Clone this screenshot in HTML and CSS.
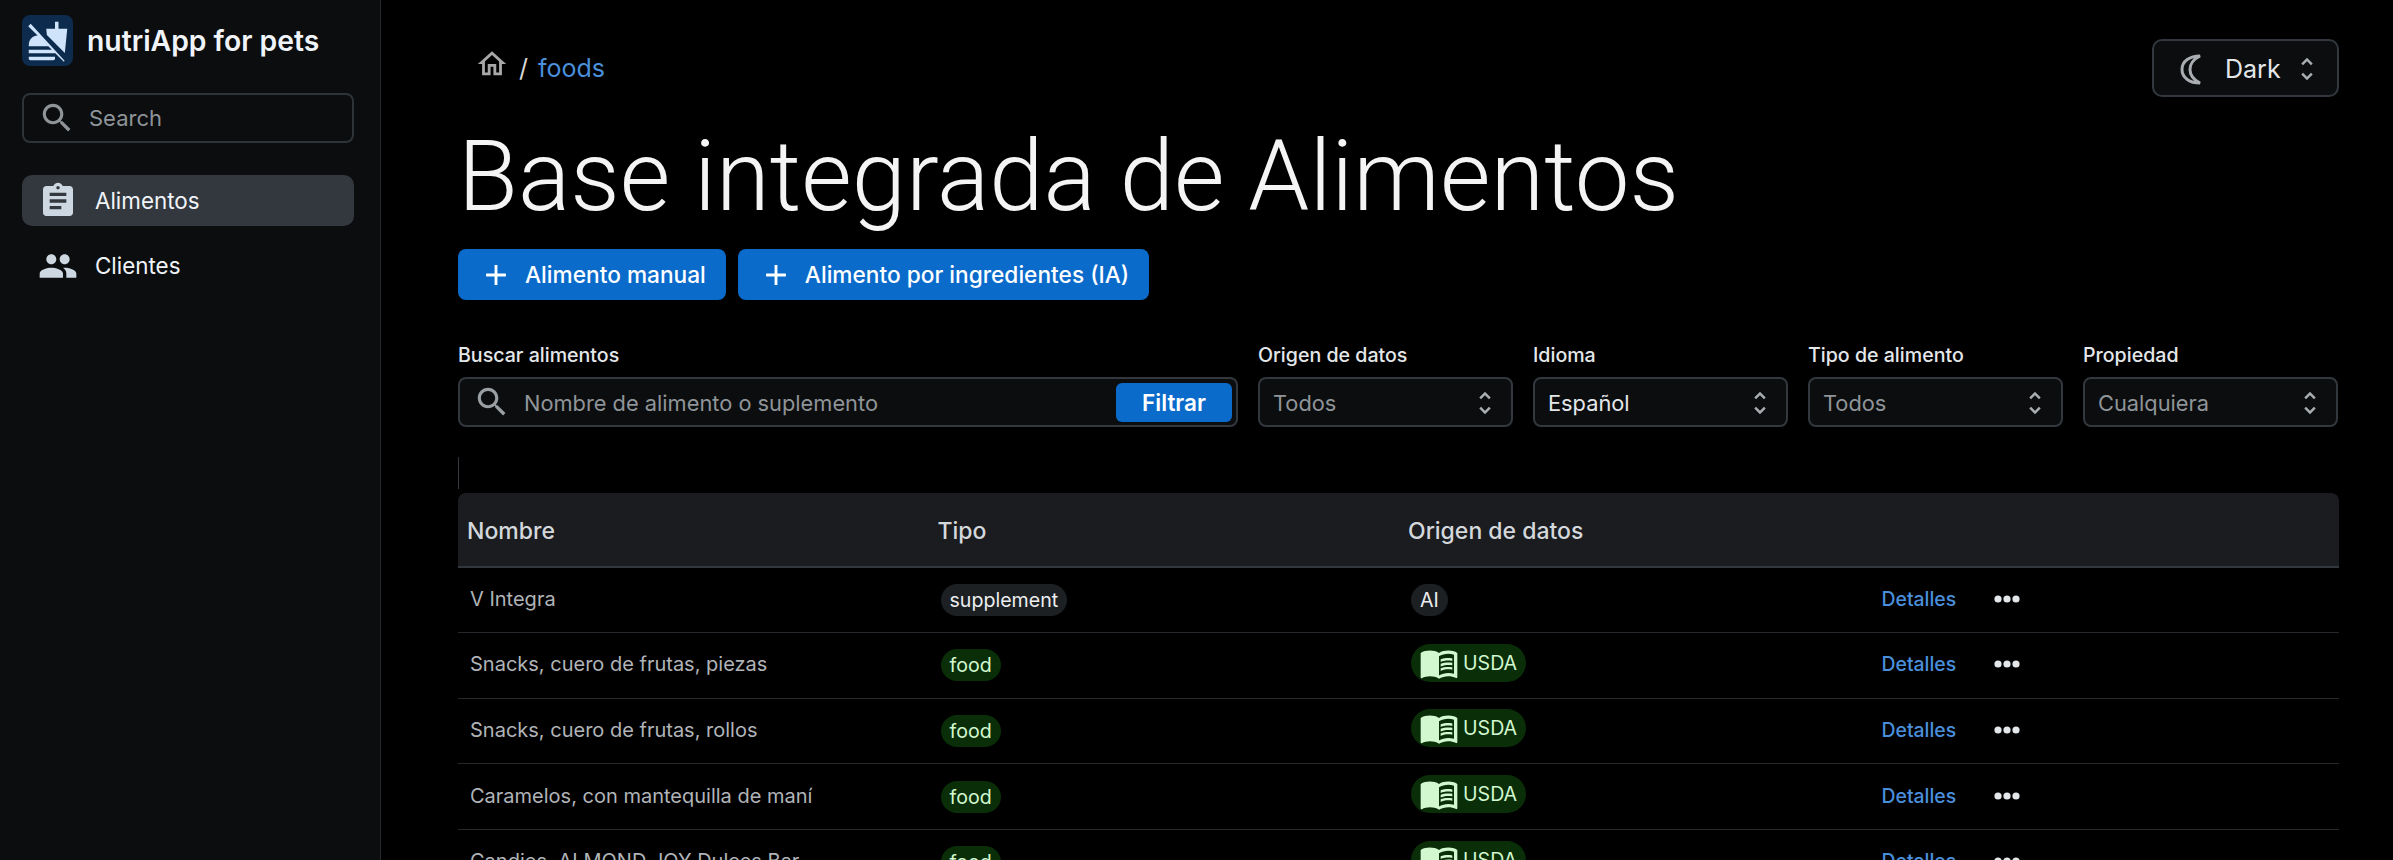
FILE: index.html
```html
<!DOCTYPE html>
<html lang="es">
<head>
    <meta charset="UTF-8">
    <meta name="viewport" content="width=device-width, initial-scale=1.0">
    <title>nutriApp for pets</title>
    <link rel="stylesheet" href="styles.css">
</head>
<body>
    <div class="sidebar">
        <div class="brand">
            <div class="brand-logo">
                <svg viewBox="0 0 24 24" width="42" height="42"><path d="M11.35 8.52L11 5h5V1h2v4h5l-1.38 13.79L11.35 8.52zM1 21v1c0 .55.45 1 1 1h13c.55 0 1-.45 1-1v-1H1zm20.49 2.31L2.1 2.1.69 3.51l5.35 5.35C3.33 9.2 1 10.53 1 15h11.17l2 2H1v2h15v-.17l5.07 5.07z"/></svg>
            </div>
            <span class="brand-name">nutriApp for pets</span>
        </div>
        <div class="side-search">
            <svg viewBox="0 0 24 24" width="38" height="38"><path d="M15.5 14h-.79l-.28-.27C15.41 12.59 16 11.11 16 9.5 16 5.91 13.09 3 9.5 3S3 5.91 3 9.5 5.91 16 9.5 16c1.61 0 3.09-.59 4.23-1.57l.27.28v.79l5 4.99L20.49 19l-4.99-5zm-6 0C7.01 14 5 11.99 5 9.5S7.01 5 9.5 5 14 7.01 14 9.5 11.99 14 9.5 14z"/></svg>
            <span>Search</span>
        </div>
        <div class="nav">
            <a class="nav-item active" href="#">
                <svg viewBox="0 0 24 24" width="40" height="40"><path d="M19 3h-4.18C14.4 1.84 13.3 1 12 1c-1.3 0-2.4.84-2.82 2H5c-1.1 0-2 .9-2 2v14c0 1.1.9 2 2 2h14c1.1 0 2-.9 2-2V5c0-1.1-.9-2-2-2zm-7 0c.55 0 1 .45 1 1s-.45 1-1 1-1-.45-1-1 .45-1 1-1zm2 14H7v-2h7v2zm3-4H7v-2h10v2zm0-4H7V7h10v2z"/></svg>
                Alimentos
            </a>
            <a class="nav-item" href="#">
                <svg viewBox="0 0 24 24" width="40" height="40"><path d="M16 11c1.66 0 2.99-1.34 2.99-3S17.66 5 16 5c-1.66 0-3 1.34-3 3s1.34 3 3 3zm-8 0c1.66 0 2.99-1.34 2.99-3S9.66 5 8 5C6.34 5 5 6.34 5 8s1.34 3 3 3zm0 2c-2.33 0-7 1.17-7 3.5V19h14v-2.5c0-2.33-4.67-3.5-7-3.5zm8 0c-.29 0-.62.02-.97.05 1.16.84 1.97 1.97 1.97 3.45V19h6v-2.5c0-2.33-4.67-3.5-7-3.5z"/></svg>
                Clientes
            </a>
        </div>
    </div>

    <div class="main">
        <div class="topbar">
            <div class="breadcrumb">
                <svg viewBox="0 0 24 24" width="34" height="34"><path d="M12 5.69l5 4.5V18h-2v-6H9v6H7v-7.81l5-4.5M12 3L2 12h3v8h6v-6h2v6h6v-8h3L12 3z"/></svg>
                <span class="crumb-sep">/</span>
                <a class="crumb-link" href="#">foods</a>
            </div>
            <div class="theme-select">
                <svg class="moon" viewBox="0 0 24 32" width="24" height="32"><path d="M21 3C11 3 3 8 3 16.5S11 30 21 30C15 27 11 22 11 16.5S15 6 21 3Z"/></svg>
                <span>Dark</span>
                <svg class="unfold" viewBox="0 0 24 24" width="30" height="30"><path d="M12 5.83 15.17 9l1.41-1.41L12 3 7.41 7.59 8.83 9 12 5.83zm0 12.34L8.83 15l-1.41 1.41L12 21l4.59-4.59L15.17 15 12 18.17z"/></svg>
            </div>
        </div>

        <h1 class="title">Base integrada de Alimentos</h1>

        <div class="actions">
            <button class="btn">
                <svg viewBox="0 0 24 24" width="34" height="34"><path d="M19 13h-6v6h-2v-6H5v-2h6V5h2v6h6v2z"/></svg>
                Alimento manual
            </button>
            <button class="btn">
                <svg viewBox="0 0 24 24" width="34" height="34"><path d="M19 13h-6v6h-2v-6H5v-2h6V5h2v6h6v2z"/></svg>
                Alimento por ingredientes (IA)
            </button>
        </div>

        <div class="filters">
            <div class="field">
                <label>Buscar alimentos</label>
                <div class="control search-control">
                    <svg viewBox="0 0 24 24" width="38" height="38"><path d="M15.5 14h-.79l-.28-.27C15.41 12.59 16 11.11 16 9.5 16 5.91 13.09 3 9.5 3S3 5.91 3 9.5 5.91 16 9.5 16c1.61 0 3.09-.59 4.23-1.57l.27.28v.79l5 4.99L20.49 19l-4.99-5zm-6 0C7.01 14 5 11.99 5 9.5S7.01 5 9.5 5 14 7.01 14 9.5 11.99 14 9.5 14z"/></svg>
                    <span class="placeholder">Nombre de alimento o suplemento</span>
                    <button class="filter-btn">Filtrar</button>
                </div>
            </div>
            <div class="field">
                <label>Origen de datos</label>
                <div class="control select"><span class="placeholder">Todos</span>
                    <svg class="unfold" viewBox="0 0 24 24" width="30" height="30"><path d="M12 5.83 15.17 9l1.41-1.41L12 3 7.41 7.59 8.83 9 12 5.83zm0 12.34L8.83 15l-1.41 1.41L12 21l4.59-4.59L15.17 15 12 18.17z"/></svg>
                </div>
            </div>
            <div class="field">
                <label>Idioma</label>
                <div class="control select"><span>Español</span>
                    <svg class="unfold" viewBox="0 0 24 24" width="30" height="30"><path d="M12 5.83 15.17 9l1.41-1.41L12 3 7.41 7.59 8.83 9 12 5.83zm0 12.34L8.83 15l-1.41 1.41L12 21l4.59-4.59L15.17 15 12 18.17z"/></svg>
                </div>
            </div>
            <div class="field">
                <label>Tipo de alimento</label>
                <div class="control select"><span class="placeholder">Todos</span>
                    <svg class="unfold" viewBox="0 0 24 24" width="30" height="30"><path d="M12 5.83 15.17 9l1.41-1.41L12 3 7.41 7.59 8.83 9 12 5.83zm0 12.34L8.83 15l-1.41 1.41L12 21l4.59-4.59L15.17 15 12 18.17z"/></svg>
                </div>
            </div>
            <div class="field">
                <label>Propiedad</label>
                <div class="control select"><span class="placeholder">Cualquiera</span>
                    <svg class="unfold" viewBox="0 0 24 24" width="30" height="30"><path d="M12 5.83 15.17 9l1.41-1.41L12 3 7.41 7.59 8.83 9 12 5.83zm0 12.34L8.83 15l-1.41 1.41L12 21l4.59-4.59L15.17 15 12 18.17z"/></svg>
                </div>
            </div>
        </div>

        <div class="divider"></div>

        <table class="foods">
            <thead>
                <tr>
                    <th>Nombre</th>
                    <th>Tipo</th>
                    <th>Origen de datos</th>
                    <th></th>
                </tr>
            </thead>
            <tbody id="rows"></tbody>
        </table>
    </div>

    <svg class="sprites" width="0" height="0">
        <symbol id="book" viewBox="0 0 24 24">
            <path d="M21 5c-1.11-.35-2.33-.5-3.5-.5-1.95 0-4.05.4-5.5 1.5-1.45-1.1-3.55-1.5-5.5-1.5S2.45 4.9 1 6v14.65c0 .25.25.5.5.5.1 0 .15-.05.25-.05C3.1 20.45 5.05 20 6.5 20c1.95 0 4.05.4 5.5 1.5 1.35-.85 3.8-1.5 5.5-1.5 1.65 0 3.35.3 4.75 1.05.1.05.15.05.25.05.25 0 .5-.25.5-.5V6c-.6-.45-1.25-.75-2-1zm0 13.5c-1.1-.35-2.3-.5-3.5-.5-1.7 0-4.15.65-5.5 1.5V8c1.35-.85 3.8-1.5 5.5-1.5 1.2 0 2.4.15 3.5.5v11.5z"/>
            <path d="M17.5 10.5c.88 0 1.73.09 2.5.26V9.24c-.79-.15-1.64-.24-2.5-.24-1.7 0-3.24.29-4.5.78v1.66c1.13-.64 2.7-.94 4.5-.94zM13 12.49v1.66c1.13-.64 2.7-.99 4.5-.99.88 0 1.73.09 2.5.26V11.9c-.79-.15-1.64-.24-2.5-.24-1.7 0-3.24.3-4.5.83zM17.5 14.33c-1.7 0-3.24.29-4.5.78v1.66c1.13-.64 2.7-.99 4.5-.99.88 0 1.73.09 2.5.26v-1.52c-.79-.16-1.64-.19-2.5-.19z"/>
        </symbol>
    </svg>

    <script>
        // Filas de la tabla
        const foods = [
            ['V Integra', 'supplement', 'AI'],
            ['Snacks, cuero de frutas, piezas', 'food', 'USDA'],
            ['Snacks, cuero de frutas, rollos', 'food', 'USDA'],
            ['Caramelos, con mantequilla de maní', 'food', 'USDA'],
            ['Candies, ALMOND JOY Dulces Bar', 'food', 'USDA']
        ];
        const rows = document.getElementById('rows');
        foods.forEach(food => {
            const green = food[1] === 'food' ? ' green' : '';
            const origin = food[2] === 'USDA'
                ? `<span class="pill green origin"><svg width="40" height="40"><use href="#book"/></svg>USDA</span>`
                : `<span class="pill">${food[2]}</span>`;
            rows.innerHTML += `<tr>
                <td class="name">${food[0]}</td>
                <td><span class="pill${green}">${food[1]}</span></td>
                <td>${origin}</td>
                <td><div class="row-actions"><a href="#">Detalles</a>
                    <svg viewBox="0 0 26 8" width="26" height="8"><circle cx="4" cy="4" r="3.6"/><circle cx="13" cy="4" r="3.6"/><circle cx="22" cy="4" r="3.6"/></svg>
                </div></td>
            </tr>`;
        });
    </script>
</body>
</html>
```

FILE: styles.css
```css
html, body {
    margin: 0;
    padding: 0;
    height: 100%;
    overflow: hidden;
}
body {
    display: flex;
    background-color: #000;
    color: #f0f4f8;
    font-family: Inter, "Noto Sans", sans-serif;
}
svg {
    fill: currentColor;
    flex-shrink: 0;
}
a {
    text-decoration: none;
}
.sprites {
    position: absolute;
}

/* Barra lateral */
.sidebar {
    width: 380px;
    flex-shrink: 0;
    padding: 15px 0 0;
    background-color: #0b0d0f;
    border-right: 1px solid #25282c;
}
.brand {
    display: flex;
    align-items: center;
    gap: 14px;
    margin-left: 22px;
}
.brand-logo {
    width: 51px;
    height: 51px;
    border-radius: 8px;
    background-color: #0c2b4d;
    color: #cfe4fb;
    display: flex;
    align-items: center;
    justify-content: center;
}
.brand-name {
    font-size: 28.3px;
    font-weight: 600;
    color: #f0f4f8;
}
.side-search {
    display: flex;
    align-items: center;
    gap: 13px;
    height: 50px;
    box-sizing: border-box;
    width: 332px;
    margin: 27px 0 0 22px;
    padding-left: 14px;
    border: 2px solid #2e3338;
    border-radius: 8px;
    background-color: #0b0d0e;
    color: #8f9499;
    font-size: 22px;
}
.nav {
    margin: 32px 0 0 22px;
    width: 332px;
    display: flex;
    flex-direction: column;
    gap: 14px;
}
.nav-item {
    display: flex;
    align-items: center;
    gap: 17px;
    height: 51px;
    padding-left: 16px;
    border-radius: 10px;
    color: #f0f4f8;
    font-size: 22.4px;
    font-weight: 400;
}
.nav-item svg {
    color: #cdd7e1;
}
.nav-item.active {
    background-color: #32383e;
}

/* Contenido */
.main {
    flex: 1;
    min-width: 0;
    padding: 39px 54px 0 77px;
}
.topbar {
    display: flex;
    justify-content: space-between;
    align-items: center;
    height: 58px;
}
.breadcrumb {
    display: flex;
    align-items: center;
    padding-left: 17px;
    font-size: 25px;
    color: #b9b9b9;
}
.breadcrumb svg {
    color: #a8a8a8;
    margin-top: -8px;
}
.crumb-sep {
    margin: 0 10px;
    color: #d8d8d8;
}
.crumb-link {
    color: #4a8fdc;
}
.theme-select {
    display: flex;
    align-items: center;
    width: 187px;
    height: 58px;
    box-sizing: border-box;
    padding: 1px 0 0 25px;
    border: 2px solid #32383e;
    border-radius: 10px;
    background-color: #0b0d0e;
    font-size: 25px;
    color: #e4e7ea;
}
.moon {
    fill: none;
    stroke: #a9adb1;
    stroke-width: 3;
    margin-right: 22px;
}
.theme-select .unfold {
    margin-left: 11px;
    color: #a9adb1;
}
.title {
    margin: 23px 0 0;
    font-size: 97.7px;
    line-height: 114px;
    font-weight: 300;
    color: #f4f4f4;
    font-family: Roboto, Inter, sans-serif;
    white-space: nowrap;
}
.actions {
    display: flex;
    gap: 12px;
    margin-top: 15px;
}
.btn {
    display: flex;
    align-items: center;
    gap: 12px;
    height: 51px;
    padding: 0 20px 0 21px;
    border: none;
    border-radius: 8px;
    background-color: #0b6bcb;
    color: #fff;
    font-family: Inter, sans-serif;
    font-size: 22.7px;
    font-weight: 500;
}

/* Filtros */
.filters {
    display: grid;
    grid-template-columns: 780px repeat(4, 255px);
    gap: 20px;
    margin-top: 43px;
}
.field label {
    display: block;
    font-size: 19.6px;
    line-height: 24px;
    font-weight: 500;
    color: #e4e7ea;
    margin-bottom: 10px;
}
.control {
    display: flex;
    align-items: center;
    height: 50px;
    box-sizing: border-box;
    padding-top: 2px;
    border: 2px solid #32383e;
    border-radius: 8px;
    background-color: #0b0d0e;
    font-size: 21.8px;
    color: #e4e7ea;
}
.placeholder {
    color: #8f9499;
}
.search-control {
    padding: 0 4px 0 13px;
    gap: 13px;
}
.search-control svg {
    color: #9a9fa4;
}
.search-control .placeholder {
    flex: 1;
    padding-top: 2px;
}
.filter-btn {
    width: 116px;
    height: 39px;
    border: none;
    border-radius: 6px;
    background-color: #0b6bcb;
    color: #fff;
    font-family: Inter, sans-serif;
    font-size: 22.5px;
    font-weight: 600;
}
.select {
    justify-content: space-between;
    padding: 2px 11px 0 13px;
}
.select .unfold {
    color: #a9adb1;
}
.divider {
    height: 32px;
    margin-top: 30px;
    margin-bottom: 4px;
    border-left: 1px solid #32383e;
}

/* Tabla */
.foods {
    width: 100%;
    table-layout: fixed;
    border-collapse: collapse;
}
.foods th {
    box-sizing: border-box;
    width: 470.5px;
    height: 74px;
    padding: 2px 0 0 9px;
    text-align: left;
    font-size: 23px;
    font-weight: 500;
    color: #d4d8dc;
    background-color: #1a1c1f;
    border-bottom: 2px solid #32383e;
}
.foods th:first-child {
    border-top-left-radius: 8px;
}
.foods th:last-child {
    width: auto;
    border-top-right-radius: 8px;
}
.foods td {
    box-sizing: border-box;
    height: 65.6px;
    padding: 0 0 0 12px;
    border-bottom: 1px solid #25282c;
}
.foods .name {
    font-size: 20px;
    color: #b0b4b8;
    padding-bottom: 2px;
}
.pill {
    display: inline-flex;
    align-items: center;
    height: 32px;
    padding: 0 9px;
    border-radius: 16px;
    background-color: #1d2023;
    color: #eceef0;
    font-size: 19.6px;
}
.pill.green {
    background-color: #0a2e08;
    color: #d2f8cf;
}
.pill.origin {
    height: 38px;
    border-radius: 19px;
    padding: 0 9px 0 8px;
    gap: 4px;
}
.row-actions {
    display: flex;
    align-items: center;
    gap: 38px;
    padding-bottom: 2px;
}
.row-actions a {
    color: #4a8fdc;
    font-size: 19.4px;
    font-weight: 500;
}
.row-actions svg {
    fill: #e4e7ea;
}
```
